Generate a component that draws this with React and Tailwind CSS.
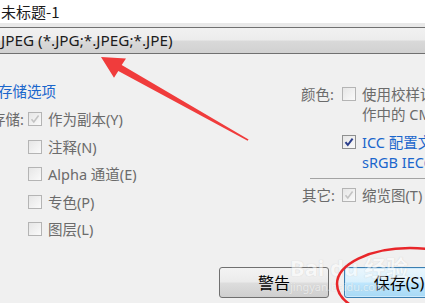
import React from 'react';

const Box = ({ state = 'off' }) => {
    // off | disabledOn | on
    const border = state === 'on' ? 'border-[#8e8f8f]' : 'border-[#b4b4b4]';
    return (
        <span className={`relative w-[14px] h-[14px] shrink-0 border ${border} bg-[linear-gradient(135deg,#e6e6e6,#fafafa)] flex items-center justify-center`}>
            {state !== 'off' && (
                <svg width="12" height="12" viewBox="0 0 12 12">
                    <path
                        d="M2.5 6.2 L4.8 9 L9.6 2.6"
                        fill="none"
                        stroke={state === 'on' ? '#2c3f8c' : '#c3c3c3'}
                        strokeWidth={state === 'on' ? 2 : 1.6}
                    />
                </svg>
            )}
        </span>
    );
};

const LeftRow = ({ label, state, text }) => (
    <div className="flex items-center h-[20px]">
        <span className="w-[38px] shrink-0 pl-[1px] text-[#6b6b6b] whitespace-nowrap">{label}</span>
        <Box state={state} />
        <span className="ml-[6px] text-[#6b6b6b] whitespace-nowrap">{text}</span>
    </div>
);

export default function App() {
    return (
        <div className="relative w-[425px] h-[303px] overflow-hidden bg-[#f0f0f0] font-['Noto_Sans','Noto_Sans_CJK_SC',sans-serif] text-[14.5px] leading-[20px]">
            {/* title */}
            <div className="h-[23px] bg-white pl-[1px] text-[15px] leading-[23px] text-[#1a1a1a] font-['Noto_Sans_CJK_SC',sans-serif]">
                未标题-1
            </div>
            <div className="h-[4px] bg-[#e9e9e9]" />
            {/* format bar */}
            <div className="h-[27px] border-y border-[#707070] bg-[linear-gradient(#f1f1f1_0%,#ececec_48%,#d9d9d9_52%,#d1d1d1_100%)] pl-[1px] text-[15.3px] leading-[25px] text-[#1c1c1c] whitespace-nowrap">
                JPEG (*.JPG;*.JPEG;*.JPE)
            </div>

            {/* body */}
            <div className="flex h-[213px]">
                <div className="ml-[-10px] w-[310px] shrink-0 pt-[27px] flex flex-col">
                    <div className="pl-[8px] text-[#1a66cc] whitespace-nowrap">存储选项</div>
                    <div className="mt-[8px] flex flex-col gap-[7.5px]">
                        <LeftRow label="存储:" state="disabledOn" text="作为副本(Y)" />
                        <LeftRow label="" state="off" text="注释(N)" />
                        <LeftRow label="" state="off" text="Alpha 通道(E)" />
                        <LeftRow label="" state="off" text="专色(P)" />
                        <LeftRow label="" state="off" text="图层(L)" />
                    </div>
                </div>

                <div className="w-[125px] shrink-0 pt-[30px] flex flex-col text-[#6b6b6b] whitespace-nowrap">
                    <div className="flex items-start">
                        <span className="w-[42px] shrink-0 pl-[1px]">颜色:</span>
                        <span className="mt-[3px]"><Box state="off" /></span>
                        <span className="ml-[6px]">使用校样设置: 工<br />作中的 CMYK</span>
                    </div>
                    <div className="flex items-start mt-[8px]">
                        <span className="w-[42px] shrink-0" />
                        <span className="mt-[3px]"><Box state="on" /></span>
                        <span className="ml-[6px] text-[#1a66cc]">ICC 配置文件(C):<br />sRGB IEC61966-2.1</span>
                    </div>
                    <div className="ml-[10px] mt-[6px] h-px bg-[#a3a3a3]" />
                    <div className="flex items-start mt-[6px]">
                        <span className="w-[42px] shrink-0 pl-[2px]">其它:</span>
                        <span className="mt-[3px]"><Box state="disabledOn" /></span>
                        <span className="ml-[6px]">缩览图(T)</span>
                    </div>
                </div>
            </div>

            {/* buttons */}
            <div className="flex gap-[15px] pl-[219px] whitespace-nowrap">
                <button className="w-[110px] h-[31px] shrink-0 rounded-[3px] border border-[#707070] bg-[linear-gradient(#f3f3f3_0%,#ebebeb_48%,#dddddd_52%,#cfcfcf_100%)] text-[16px] text-black">
                    警告
                </button>
                <button className="w-[110px] h-[31px] shrink-0 rounded-[3px] border border-[#3c7fb1] shadow-[inset_0_0_0_1px_#cdeafc] bg-[linear-gradient(#eaf6fd_0%,#d9f0fc_48%,#bee6fd_52%,#a7d9f5_100%)] text-[16px] text-black">
                    保存(S)
                </button>
            </div>

            {/* watermark */}
            <div className="absolute left-[290px] top-[254px] flex flex-col items-start opacity-50 pointer-events-none whitespace-nowrap">
                <span className="text-[22px] leading-[26px] font-bold text-white [text-shadow:0_0_1px_#a8a8a8]">Bai du 经验</span>
                <span className="text-[11px] leading-[13px] text-white [text-shadow:0_0_1px_#a8a8a8]">jingyan.baidu.com</span>
            </div>

            {/* red annotations */}
            <svg className="absolute left-0 top-0 pointer-events-none" width="425" height="303" viewBox="0 0 425 303">
                <polygon
                    points="101,57 126,58.6 121.7,65 248.6,139.4 247.6,140.8 118.3,71 114,77.8"
                    fill="#f03c3c"
                />
                <ellipse cx="410" cy="284" rx="73" ry="36" fill="none" stroke="#e8262a" strokeWidth="2.5" />
            </svg>
        </div>
    );
}
